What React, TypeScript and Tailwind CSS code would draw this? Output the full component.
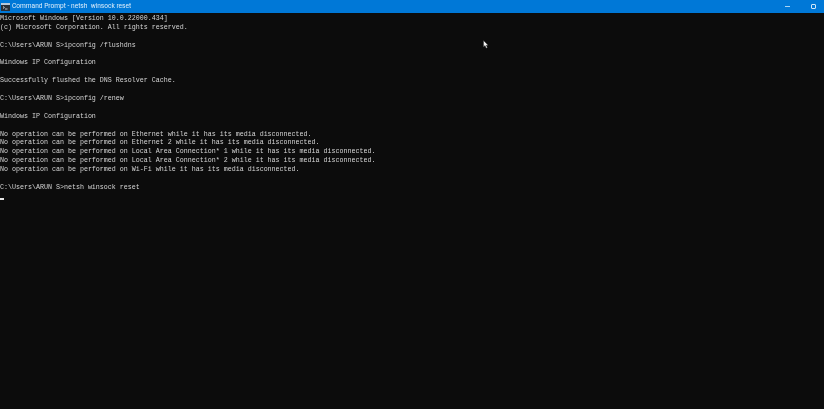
const lines = [
  "Microsoft Windows [Version 10.0.22000.434]",
  "(c) Microsoft Corporation. All rights reserved.",
  "",
  "C:\\Users\\ARUN S>ipconfig /flushdns",
  "",
  "Windows IP Configuration",
  "",
  "Successfully flushed the DNS Resolver Cache.",
  "",
  "C:\\Users\\ARUN S>ipconfig /renew",
  "",
  "Windows IP Configuration",
  "",
  "No operation can be performed on Ethernet while it has its media disconnected.",
  "No operation can be performed on Ethernet 2 while it has its media disconnected.",
  "No operation can be performed on Local Area Connection* 1 while it has its media disconnected.",
  "No operation can be performed on Local Area Connection* 2 while it has its media disconnected.",
  "No operation can be performed on Wi-Fi while it has its media disconnected.",
  "",
  "C:\\Users\\ARUN S>netsh winsock reset",
];

export default function App() {
  return (
    <div className="relative flex h-[409px] w-[824px] flex-col overflow-hidden bg-[#0c0c0c]">
      {/* Title bar */}
      <div className="flex h-[13px] shrink-0 items-center bg-[#0078d7] pl-[1px] pr-[8px] text-white">
        <svg width="9" height="8" viewBox="0 0 9 8" className="shrink-0">
          <rect width="9" height="8" fill="#2a2f36" />
          <rect width="9" height="2" fill="#b8c8d8" />
          <path d="M2 3.5l1.4 1L2 5.5M4 6H6.5" stroke="#e8e8e8" strokeWidth="0.8" fill="none" />
        </svg>
        <span className="ml-[2px] font-['Roboto',sans-serif] text-[6.6px] leading-none text-[#dcedfa] blur-[0.2px]">
          Command Prompt - netsh&nbsp; winsock reset
        </span>
        <div className="ml-auto flex items-center gap-[21px]">
          <div className="h-[1px] w-[5px] bg-[#a9d4f4]" />
          <div className="h-[5px] w-[5px] rounded-[1px] border border-[#cfe6f8]" />
        </div>
      </div>

      {/* Console output */}
      <div className="pt-[1px] font-['Liberation_Mono',monospace] text-[6.67px] leading-[8.9px] whitespace-pre text-[#d6d6d6] blur-[0.25px]">
        {lines.map((line, i) => (
          <div key={i} className="h-[8.9px]">
            {line}
          </div>
        ))}
        <div className="mt-[6px] h-[2px] w-[4px] bg-[#e6e6e6]" />
      </div>

      {/* Mouse pointer */}
      <svg width="6" height="9" viewBox="0 0 6 9" className="absolute left-[483px] top-[40px]">
        <path d="M0.5 0.5V7L2 5.6L3.2 8.2L4.4 7.6L3.2 5.2H5.2Z" fill="#f2f2f2" stroke="#222" strokeWidth="0.4" />
      </svg>
    </div>
  );
}
